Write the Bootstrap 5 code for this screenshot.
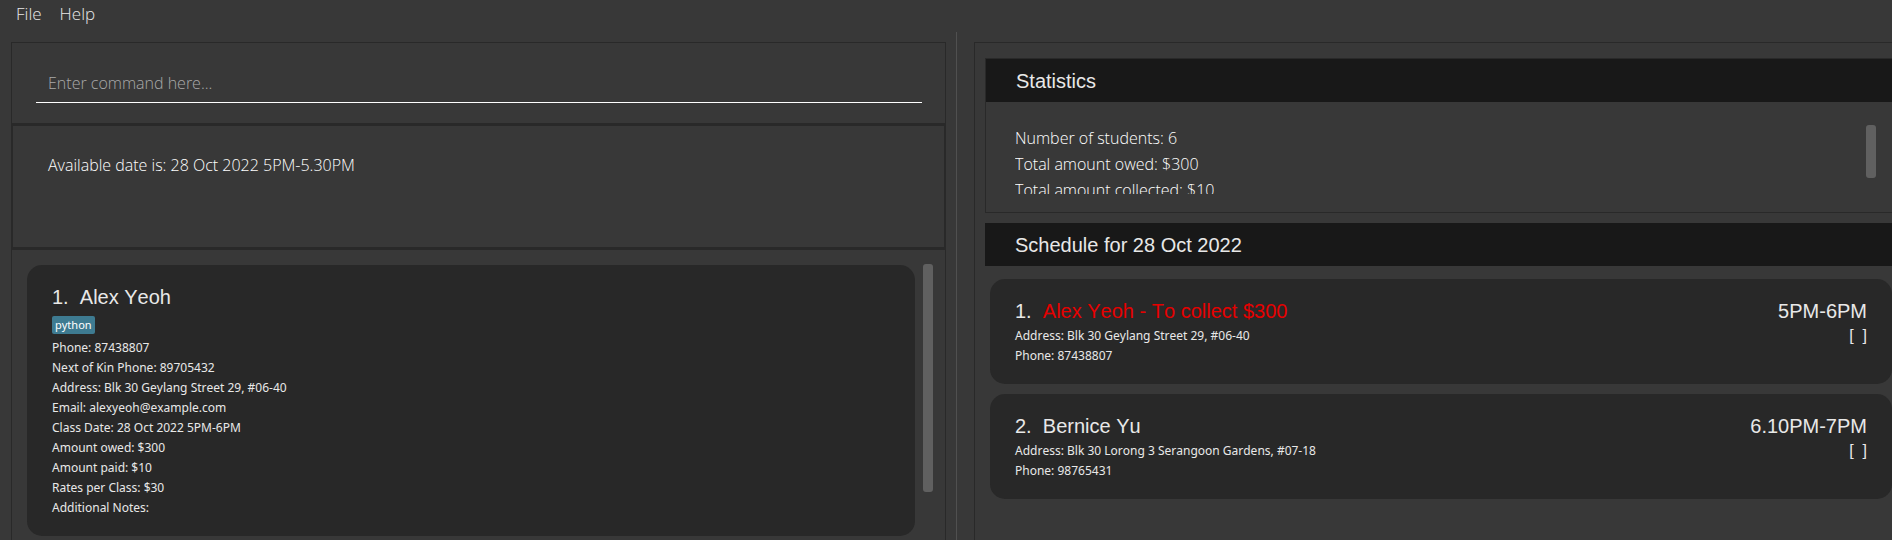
<!DOCTYPE html>
<html lang="en">
<head>
<meta charset="utf-8">
<meta name="viewport" content="width=device-width, initial-scale=1">
<title>Student manager</title>
<link rel="stylesheet" href="https://cdn.jsdelivr.net/npm/bootstrap@5.3.0/dist/css/bootstrap.min.css">
<style>
  body { background: #383838; color: #e8e8e8; font-family: "Liberation Sans", Arial, sans-serif; font-size: 13px; line-height: 20px; font-kerning: none; }
  .light-text { font-family: "Open Sans", "Noto Sans", sans-serif; font-weight: 300; font-size: 16px; line-height: 26px; color: #fff; }
  .fine-text { font-family: "Noto Sans", "Open Sans", sans-serif; font-size: 12px; line-height: 20px; }
  .menu-bar { height: 32px; padding: 0 16px 5px; gap: 18px; }
  .menu-bar .nav-link { color: #e8e8e8; padding: 0; font-size: 17px; }
  .left-side { flex: 0 0 calc(50% + 11px); padding: 10px 10px 0 11px; border-right: 1px solid #505050; }
  .right-side { min-width: 0; padding: 10px 0 0 17px; }
  .pane { border: 1px solid #292929; }
  .right-side > .pane { border-right: 0; padding: 15px 0 0 10px; }
  .command-box { padding: 20px 23px 20px 24px; }
  .command-input { background: transparent; border: 0; border-bottom: 1px solid #fff; border-radius: 0; padding: 0 12px; height: 40px; outline: 0; }
  .command-input::placeholder { color: #a9a9a9; opacity: 1; }
  .result-box { height: 127px; border: solid #292929; border-width: 3px 1px; padding: 26px 35px; }
  .student-list { padding: 15px 12px 0 15px; gap: 8px; }
  .entry { background: #282828; border-radius: 15px; padding: 19px 25px 18px; }
  .entry-title { font-family: "Liberation Sans", Arial, sans-serif; font-size: 20px; line-height: 26px; font-weight: 400; margin: 0 0 2px; white-space: pre; }
  .tag { background: #3e7b91; border-radius: 2px; font: 11px/18px "Noto Sans", "Open Sans", sans-serif; font-kerning: none; padding: 0 3px; color: #fff; margin: 4px 0; }
  .thumb { width: 10px; background: #606060; border-radius: 3px; }
  .list-thumb { height: 228px; margin-top: -1px; }
  .stats-thumb { height: 53px; }
  .section-head { background: #181818; font-size: 20px; line-height: 42px; font-weight: 400; margin: 0; padding: 1px 0 0 30px; }
  .stats-box { border-right: 0; margin-bottom: 10px; }
  .stats-body { padding: 23px 16px 18px 29px; }
  .stats-text { height: 69px; overflow: hidden; }
  .schedule { padding: 13px 0 0 5px; gap: 10px; }
  .lesson { height: 105px; }
  .owing { color: #e60000; }
  .mark-box { font-size: 16px; line-height: 20px; white-space: pre; }
</style>
</head>
<body class="vh-100 overflow-hidden d-flex flex-column">
  <nav class="menu-bar light-text d-flex align-items-center flex-shrink-0">
    <a class="nav-link" href="#file">File</a>
    <a class="nav-link" href="#help">Help</a>
  </nav>
  <main class="d-flex flex-grow-1 overflow-hidden">
    <section class="left-side d-flex flex-column">
      <div class="pane border-bottom-0 d-flex flex-column flex-grow-1 overflow-hidden">
        <form class="command-box">
          <input class="command-input light-text w-100 d-block" type="text" aria-label="Command" placeholder="Enter command here...">
        </form>
        <div class="result-box light-text flex-shrink-0" role="status"><div>Available date is: 28 Oct 2022 5PM-5.30PM</div></div>
        <div class="student-list d-flex align-items-start">
          <article class="entry fine-text flex-grow-1">
            <h2 class="entry-title">1.  Alex Yeoh</h2>
            <div class="d-flex"><span class="tag">python</span></div>
            <div>Phone: 87438807</div>
            <div>Next of Kin Phone: 89705432</div>
            <div>Address: Blk 30 Geylang Street 29, #06-40</div>
            <div>Email: alexyeoh@example.com</div>
            <div>Class Date: 28 Oct 2022 5PM-6PM</div>
            <div>Amount owed: $300</div>
            <div>Amount paid: $10</div>
            <div>Rates per Class: $30</div>
            <div>Additional Notes:</div>
          </article>
          <div class="thumb list-thumb"></div>
        </div>
      </div>
    </section>
    <section class="right-side d-flex flex-column flex-grow-1">
      <div class="pane border-bottom-0 flex-grow-1">
        <div class="pane stats-box">
          <h1 class="section-head">Statistics</h1>
          <div class="stats-body d-flex justify-content-between">
            <div class="stats-text light-text">
              <div>Number of students: 6</div>
              <div>Total amount owed: $300</div>
              <div>Total amount collected: $10</div>
            </div>
            <div class="thumb stats-thumb"></div>
          </div>
        </div>
        <h1 class="section-head">Schedule for 28 Oct 2022</h1>
        <div class="schedule d-flex flex-column">
          <article class="entry lesson d-flex justify-content-between">
            <div class="fine-text">
              <h2 class="entry-title">1.  <span class="owing">Alex Yeoh - To collect $300</span></h2>
              <div>Address: Blk 30 Geylang Street 29, #06-40</div>
              <div>Phone: 87438807</div>
            </div>
            <div class="text-end">
              <div class="entry-title">5PM-6PM</div>
              <div class="mark-box">[  ]</div>
            </div>
          </article>
          <article class="entry lesson d-flex justify-content-between">
            <div class="fine-text">
              <h2 class="entry-title">2.  Bernice Yu</h2>
              <div>Address: Blk 30 Lorong 3 Serangoon Gardens, #07-18</div>
              <div>Phone: 98765431</div>
            </div>
            <div class="text-end">
              <div class="entry-title">6.10PM-7PM</div>
              <div class="mark-box">[  ]</div>
            </div>
          </article>
        </div>
      </div>
    </section>
  </main>
  <script src="https://cdn.jsdelivr.net/npm/bootstrap@5.3.0/dist/js/bootstrap.bundle.min.js"></script>
</body>
</html>
